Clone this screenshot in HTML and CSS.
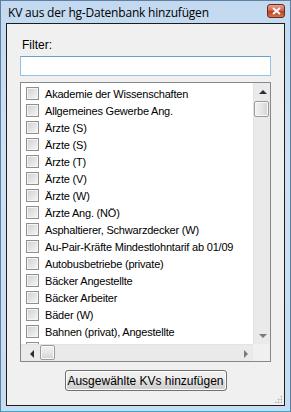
FILE: index.html
```html
<!DOCTYPE html>
<html lang="de">
<head>
    <meta charset="UTF-8">
    <title>KV aus der hg-Datenbank hinzufügen</title>
    <link rel="stylesheet" href="styles.css">
</head>
<body>
    <div class="window">
        <div class="titlebar">
            <span class="title">KV aus der hg-Datenbank hinzufügen</span>
            <span class="close-btn">
                <svg width="9" height="8" viewBox="0 0 9 8">
                    <path d="M1 1 L8 7 M8 1 L1 7" stroke="#fff" stroke-width="2"/>
                </svg>
            </span>
        </div>
        <div class="client">
            <label class="filter-label">Filter:</label>
            <div class="filter-box"></div>

            <div class="listbox">
                <div class="items">
                    <div class="item"><span class="check"></span>Akademie der Wissenschaften</div>
                    <div class="item"><span class="check"></span>Allgemeines Gewerbe Ang.</div>
                    <div class="item"><span class="check"></span>Ärzte (S)</div>
                    <div class="item"><span class="check"></span>Ärzte (S)</div>
                    <div class="item"><span class="check"></span>Ärzte (T)</div>
                    <div class="item"><span class="check"></span>Ärzte (V)</div>
                    <div class="item"><span class="check"></span>Ärzte (W)</div>
                    <div class="item"><span class="check"></span>Ärzte Ang. (NÖ)</div>
                    <div class="item"><span class="check"></span>Asphaltierer, Schwarzdecker (W)</div>
                    <div class="item"><span class="check"></span>Au-Pair-Kräfte Mindestlohntarif ab 01/09</div>
                    <div class="item"><span class="check"></span>Autobusbetriebe (private)</div>
                    <div class="item"><span class="check"></span>Bäcker Angestellte</div>
                    <div class="item"><span class="check"></span>Bäcker Arbeiter</div>
                    <div class="item"><span class="check"></span>Bäder (W)</div>
                    <div class="item"><span class="check"></span>Bahnen (privat), Angestellte</div>
                    <div class="item"><span class="check"></span>Banken Tabakwaren ab 01/09</div>
                </div>
                <div class="vscroll">
                    <span class="arrow up"></span>
                    <span class="thumb v"></span>
                    <span class="track"></span>
                    <span class="arrow down"></span>
                </div>
                <div class="hscroll">
                    <span class="arrow left"></span>
                    <span class="thumb h"></span>
                    <span class="track"></span>
                    <span class="arrow right"></span>
                </div>
                <div class="corner"></div>
            </div>

            <div class="actions">
                <button class="add-btn">Ausgewählte KVs hinzufügen</button>
            </div>
            <span class="grip"></span>
        </div>
    </div>
</body>
</html>
```

FILE: styles.css
```css
body {
    margin: 0;
    padding: 0;
    font-family: 'Liberation Sans', Arial, sans-serif;
}

.window {
    width: 291px;
    height: 412px;
    box-sizing: border-box;
    border: 1px solid #5d7fa3;
    border-bottom-color: #2fa7cf;
    background: linear-gradient(180deg, #c2d9f0 0%, #cfe1f3 40%, #c6dcf1 100%);
    padding: 0 5px 5px 5px;
    display: flex;
    flex-direction: column;
}

.titlebar {
    height: 22px;
    display: flex;
    align-items: center;
    justify-content: space-between;
}

.title {
    font-family: 'Open Sans', sans-serif;
    font-size: 12px;
    color: #000;
    padding-left: 2px;
    letter-spacing: -0.2px;
}

.close-btn {
    width: 16px;
    height: 12px;
    border: 1px solid #6b2a1c;
    border-radius: 3px;
    background: linear-gradient(180deg, #e7a190 0%, #d06a50 45%, #b8411f 55%, #d57550 100%);
    display: flex;
    align-items: center;
    justify-content: center;
    margin-top: -2px;
}

.client {
    flex: 1;
    background: #f0f0f0;
    border: 1px solid #1d1d1d;
    display: flex;
    flex-direction: column;
    padding: 0 13px 0 13px;
    position: relative;
}

.filter-label {
    font-size: 12px;
    margin-top: 14px;
    padding-left: 2px;
    color: #000;
    line-height: 14px;
}

.filter-box {
    height: 18px;
    margin-top: 4px;
    background: #fff;
    border: 1px solid #95c0e8;
    border-top-color: #6a9fd2;
}

.listbox {
    margin-top: 6px;
    height: 278px;
    border: 1px solid #828790;
    background: #fff;
    display: grid;
    grid-template-columns: 1fr 17px;
    grid-template-rows: 1fr 17px;
}

.items {
    overflow: hidden;
    padding-top: 2px;
    padding-left: 5px;
}

.item {
    height: 17px;
    display: flex;
    align-items: center;
    font-size: 11px;
    letter-spacing: -0.2px;
    white-space: nowrap;
    color: #000;
}

.check {
    width: 11px;
    height: 11px;
    flex: none;
    border: 1px solid #8e8f8f;
    background: linear-gradient(135deg, #cfcfcf, #f7f7f7);
    box-shadow: inset 0 0 0 1px #f4f4f4;
    margin-right: 6px;
}

.vscroll,
.hscroll {
    background: #eaeaea;
    display: flex;
}

.vscroll {
    flex-direction: column;
    border-left: 1px solid #e3e3e3;
}

.hscroll {
    border-top: 1px solid #e3e3e3;
}

.track {
    flex: 1;
}

.arrow {
    flex: none;
    width: 17px;
    height: 17px;
    position: relative;
}

.arrow::after {
    content: "";
    position: absolute;
    width: 0;
    height: 0;
    border: 4px solid transparent;
}

.arrow.up::after {
    left: 5px;
    top: 3px;
    border-bottom-color: #2e2e2e;
}

.arrow.down::after {
    left: 5px;
    top: 7px;
    border-top-color: #7a7a7a;
}

.arrow.left::after {
    left: 3px;
    top: 5px;
    border-right-color: #2e2e2e;
}

.arrow.right::after {
    left: 8px;
    top: 5px;
    border-left-color: #7a7a7a;
}

.hscroll .arrow {
    width: 15px;
    margin: 0 2px;
}

.thumb {
    flex: none;
    box-sizing: border-box;
    border: 1px solid #9b9b9b;
    border-radius: 2px;
    box-shadow: inset 0 0 0 1px #f8f8f8;
}

.thumb.v {
    height: 16px;
    margin: 1px 1px 0 0;
    background: linear-gradient(90deg, #f2f2f2 0%, #e6e6e6 50%, #d3d3d3 100%);
}

.thumb.h {
    width: 15px;
    margin: 0 0 1px 0;
    background: linear-gradient(180deg, #f2f2f2 0%, #e6e6e6 50%, #d3d3d3 100%);
}

.corner {
    background: #f0f0f0;
}

.actions {
    display: flex;
    justify-content: center;
    margin-top: 8px;
}

.add-btn {
    width: 162px;
    height: 21px;
    padding: 0;
    font-family: 'Liberation Sans', Arial, sans-serif;
    font-size: 12px;
    color: #000;
    border: 1px solid #707070;
    border-radius: 3px;
    background: linear-gradient(180deg, #f2f2f2 0%, #ebebeb 48%, #dddddd 52%, #cfcfcf 100%);
    box-shadow: inset 0 0 0 1px #fcfcfc;
}

.grip {
    position: absolute;
    right: 2px;
    bottom: 2px;
    width: 8px;
    height: 8px;
    background: radial-gradient(circle, #b5b5b5 0.8px, transparent 1.2px) 0 0 / 3px 3px;
    clip-path: polygon(100% 0, 100% 100%, 0 100%);
}
```
